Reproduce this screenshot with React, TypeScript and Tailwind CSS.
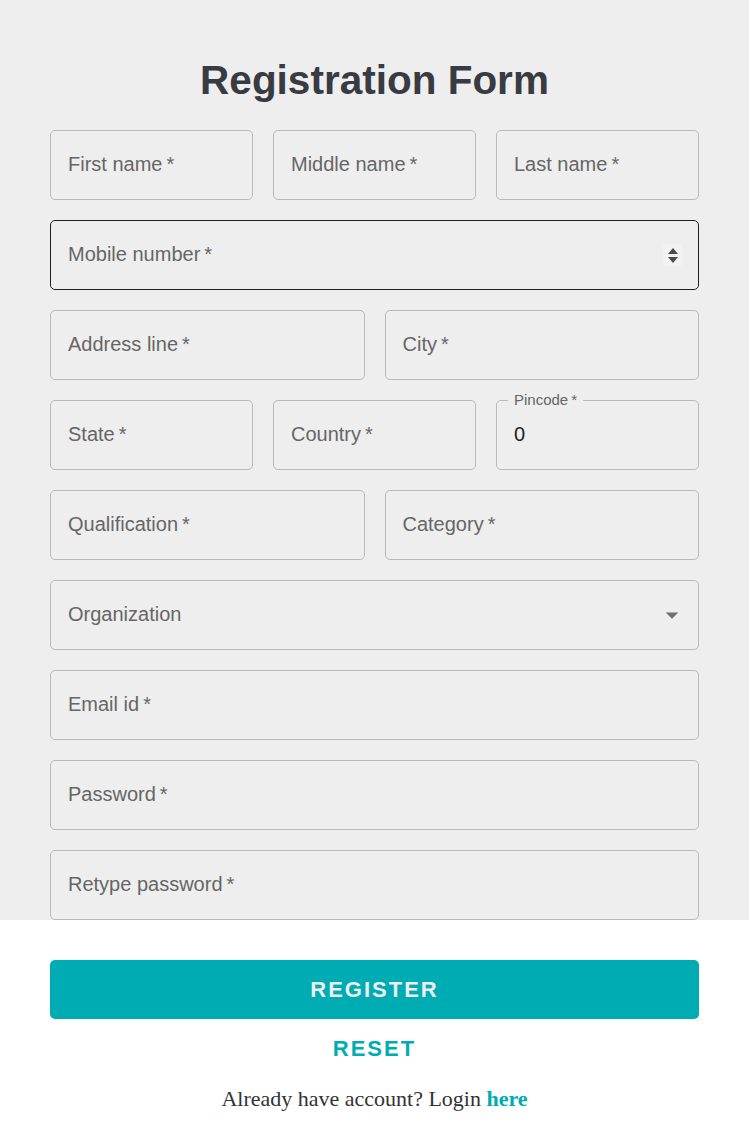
import React from "react";

const font = { fontFamily: '"Liberation Sans", Arial, sans-serif' };

function Field({ label, dark }: { label: string; dark?: boolean }) {
  return (
    <div
      className={`relative h-[70px] rounded-[5px] border flex items-center pl-[17px] pb-[2px] ${
        dark ? "border-[#1f1f1f]" : "border-[#b9b9b9]"
      }`}
    >
      <span className="text-[20px] text-[#666666] leading-none">{label}&thinsp;*</span>
    </div>
  );
}

export default function App() {
  return (
    <div style={font} className="w-[749px] min-h-[1122px] bg-white">
      <div className="bg-[#eeeeee] px-[50px] pt-[56px]">
        <h1 className="text-center text-[40.5px] leading-[48px] font-bold text-[#383b42] mb-[26px]">
          Registration Form
        </h1>
        <div className="flex flex-col gap-[20px]">
          <div className="grid grid-cols-3 gap-[20px]">
            <Field label="First name" />
            <Field label="Middle name" />
            <Field label="Last name" />
          </div>
          <div className="relative h-[70px] rounded-[5px] border border-[#1f1f1f] flex items-center pl-[17px] pr-[16px] pb-[2px]">
            <span className="text-[20px] text-[#666666] leading-none flex-1">Mobile number&thinsp;*</span>
            <div className="w-[19px] h-[22px] bg-[#f2f2f2] flex flex-col items-center justify-center gap-[3px] mt-[2px]">
              <svg width="10" height="6" viewBox="0 0 10 6">
                <path d="M5 0 L10 6 L0 6 Z" fill="#4a4a4a" />
              </svg>
              <svg width="10" height="6" viewBox="0 0 10 6">
                <path d="M0 0 L10 0 L5 6 Z" fill="#4a4a4a" />
              </svg>
            </div>
          </div>
          <div className="grid grid-cols-2 gap-[20px]">
            <Field label="Address line" />
            <Field label="City" />
          </div>
          <div className="grid grid-cols-3 gap-[20px]">
            <Field label="State" />
            <Field label="Country" />
            <div className="relative h-[70px] rounded-[5px] border border-[#b9b9b9] flex items-center pl-[17px] pb-[2px]">
              <span className="absolute left-[11px] top-[-10px] px-[6px] bg-[#eeeeee] text-[15px] leading-[18px] text-[#666666]">
                Pincode&thinsp;*
              </span>
              <span className="text-[20px] text-[#222222] leading-none">0</span>
            </div>
          </div>
          <div className="grid grid-cols-2 gap-[20px]">
            <Field label="Qualification" />
            <Field label="Category" />
          </div>
          <div className="relative h-[70px] rounded-[5px] border border-[#b9b9b9] flex items-center pl-[17px] pr-[11px] pb-[2px]">
            <span className="text-[20px] text-[#666666] leading-none flex-1">Organization</span>
            <svg width="30" height="30" viewBox="0 0 24 24" className="mt-[2px]">
              <path d="M7 10l5 5 5-5z" fill="#707070" />
            </svg>
          </div>
          <Field label="Email id" />
          <Field label="Password" />
          <Field label="Retype password" />
        </div>
      </div>
      <div className="px-[50px] pt-[40px] flex flex-col items-center">
        <button className="w-full h-[59px] rounded-[5px] bg-[#00acb3] text-[#eeeeee] text-[22px] font-bold tracking-[2px]">
          REGISTER
        </button>
        <div className="mt-[16px] h-[26px] flex items-center text-[#00acb3] text-[22px] font-bold tracking-[2px]">
          RESET
        </div>
        <p
          className="mt-[21px] text-[22px] text-[#333333]"
          style={{ fontFamily: '"Liberation Serif", "Times New Roman", serif' }}
        >
          Already have account? Login <span className="font-bold text-[#00acb3]">here</span>
        </p>
      </div>
    </div>
  );
}
